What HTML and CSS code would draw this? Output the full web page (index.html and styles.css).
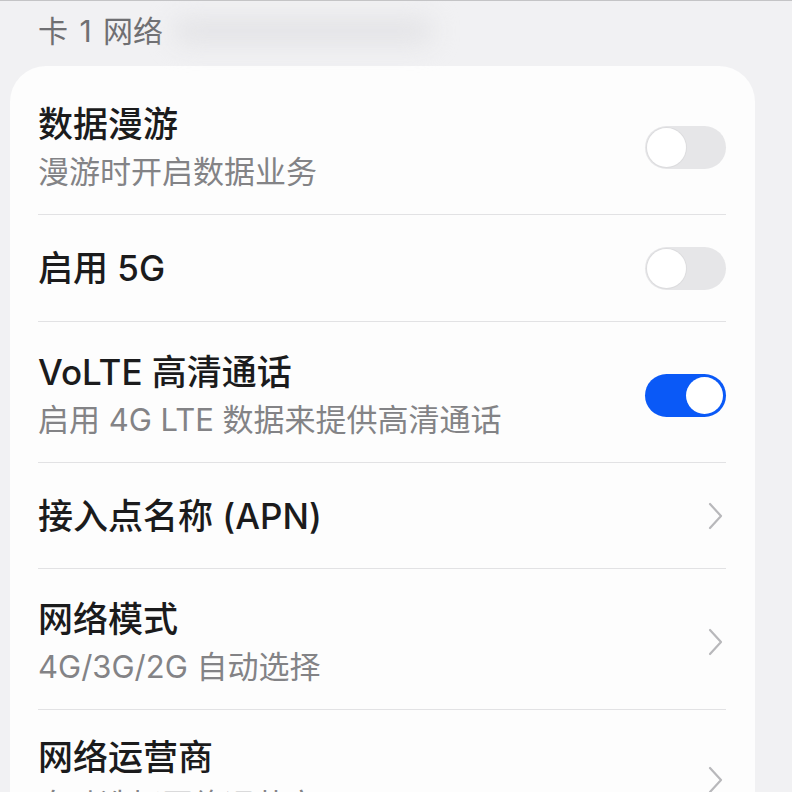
FILE: index.html
```html
<!DOCTYPE html>
<html lang="zh-CN">
<head>
<meta charset="utf-8">
<link rel="stylesheet" href="styles.css">
</head>
<body>
<div class="page">
  <div class="section-header">
    <span class="section-title">卡 1 网络</span>
    <span class="smudge"></span>
  </div>
  <div class="card">
    <div class="row two">
      <div class="text">
        <div class="title">数据漫游</div>
        <div class="sub">漫游时开启数据业务</div>
      </div>
      <div class="switch"><span class="knob"></span></div>
    </div>
    <div class="row one">
      <div class="text">
        <div class="title">启用 5G</div>
      </div>
      <div class="switch"><span class="knob"></span></div>
    </div>
    <div class="row two">
      <div class="text">
        <div class="title">VoLTE 高清通话</div>
        <div class="sub">启用 4G LTE 数据来提供高清通话</div>
      </div>
      <div class="switch on"><span class="knob"></span></div>
    </div>
    <div class="row one tight">
      <div class="text">
        <div class="title">接入点名称 (APN)</div>
      </div>
      <svg class="chev" width="16" height="28" viewBox="0 0 16 28"><path d="M2 2 L13 14 L2 26" fill="none" stroke="#b8b8bb" stroke-width="2.2" stroke-linecap="round" stroke-linejoin="round"/></svg>
    </div>
    <div class="row two">
      <div class="text">
        <div class="title">网络模式</div>
        <div class="sub">4G/3G/2G 自动选择</div>
      </div>
      <svg class="chev" width="16" height="28" viewBox="0 0 16 28"><path d="M2 2 L13 14 L2 26" fill="none" stroke="#b8b8bb" stroke-width="2.2" stroke-linecap="round" stroke-linejoin="round"/></svg>
    </div>
    <div class="row two last">
      <div class="text">
        <div class="title">网络运营商</div>
        <div class="sub">自动选择网络运营商</div>
      </div>
      <svg class="chev" width="16" height="28" viewBox="0 0 16 28"><path d="M2 2 L13 14 L2 26" fill="none" stroke="#b8b8bb" stroke-width="2.2" stroke-linecap="round" stroke-linejoin="round"/></svg>
    </div>
  </div>
</div>
</body>
</html>
```
FILE: styles.css
```css
html, body {
  margin: 0;
  padding: 0;
  height: 100%;
  overflow: hidden;
}
body {
  background: #f1f1f3;
  font-family: "Inter", "Noto Sans CJK SC", "Noto Sans", sans-serif;
  border-top: 1px solid #c4c4c6;
  box-sizing: border-box;
}
.page {
  width: 792px;
  box-sizing: border-box;
  padding: 0 37px 0 10px;
}
.section-header {
  height: 65px;
  display: flex;
  align-items: center;
  padding-left: 28px;
  padding-bottom: 6px;
  box-sizing: border-box;
}
.section-title {
  font-size: 30px;
  line-height: 40px;
  color: #6f6f72;
  word-spacing: 3px;
}
.smudge {
  display: block;
  width: 260px;
  height: 26px;
  margin-left: 10px;
  background: #e3e3e6;
  border-radius: 13px;
  filter: blur(12px);
}
.card {
  background: #fdfdfd;
  border-radius: 36px;
  padding: 8px 29px 0 28px;
  min-height: 760px;
}
.row {
  display: flex;
  align-items: center;
  justify-content: space-between;
  border-bottom: 1px solid #e2e2e4;
}
.row.one {
  padding: 31px 0 31px;
}
.row.one.tight {
  padding-bottom: 30px;
}
.row.two {
  padding: 28px 0 22px;
}
.row.last {
  border-bottom: none;
  padding-top: 25px;
}
.title {
  font-size: 35px;
  line-height: 44px;
  font-weight: 500;
  color: #1b1b1c;
}
.sub {
  margin-top: 6px;
  font-size: 31px;
  line-height: 40px;
  color: #838386;
}
.switch {
  width: 81px;
  height: 43px;
  border-radius: 22px;
  background: #e6e6e8;
  box-sizing: border-box;
  padding: 2px;
  display: flex;
  align-items: center;
  flex-shrink: 0;
}
.knob {
  width: 39px;
  height: 39px;
  border-radius: 50%;
  background: #ffffff;
  box-shadow: 0 0 0 1px #dcdcde;
}
.switch.on {
  background: #0a59f7;
  justify-content: flex-end;
  padding: 3px;
}
.switch.on .knob {
  width: 37px;
  height: 37px;
  box-shadow: none;
}
.chev {
  flex-shrink: 0;
  margin-right: 2px;
}
```
